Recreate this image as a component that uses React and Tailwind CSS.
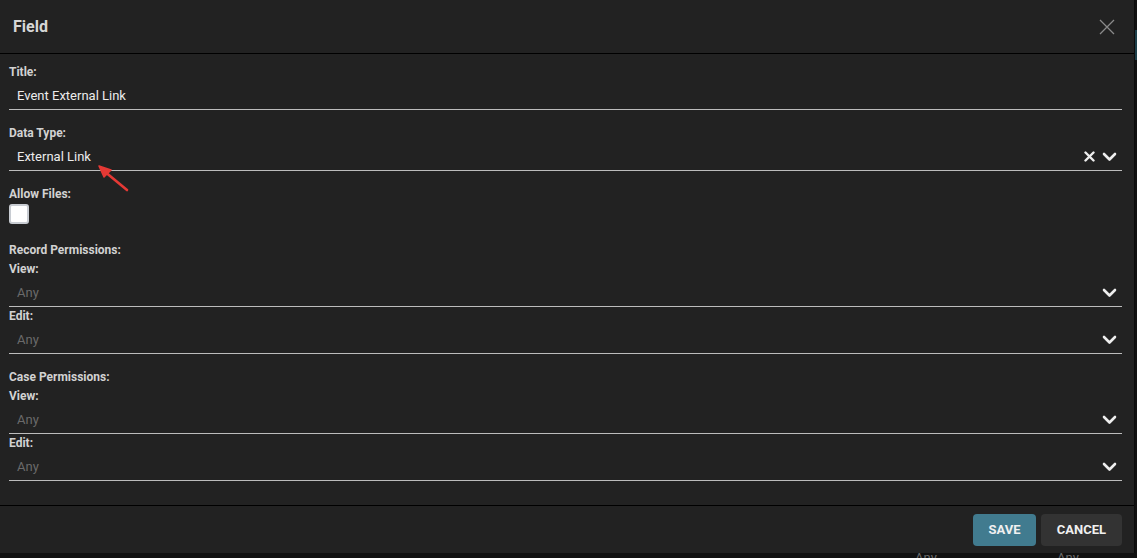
import React from 'react';

const Chevron = () => (
  <svg width="15" height="10" viewBox="0 0 15 10" className="shrink-0">
    <path d="M2 2 L7.5 7.5 L13 2" fill="none" stroke="#eeeeee" strokeWidth="2.6" strokeLinecap="round" strokeLinejoin="round" />
  </svg>
);

const ClearX = () => (
  <svg width="11" height="11" viewBox="0 0 11 11" className="shrink-0">
    <path d="M1.5 1.5 L9.5 9.5 M9.5 1.5 L1.5 9.5" stroke="#eeeeee" strokeWidth="2.4" strokeLinecap="round" />
  </svg>
);

const Label = ({ children }) => (
  <div className="h-[19px] leading-[19px] text-[12px] font-bold text-[#d2d2d2]">{children}</div>
);

const Field = ({ label, value, placeholder, clearable, select, className = '' }) => (
  <div className={className}>
    <Label>{label}</Label>
    <div className="h-[27px] flex items-center pl-[8px] pr-[5px] border-b border-[#bdbdbd] box-content">
      <span className={`flex-1 text-[13px] ${value ? 'text-[#ececec]' : 'text-[#6a6a6a]'}`}>{value || placeholder}</span>
      {clearable && <span className="mr-[7px] flex"><ClearX /></span>}
      {select && <Chevron />}
    </div>
  </div>
);

export default function App() {
  return (
    <div className="w-[1137px] h-[558px] overflow-hidden bg-[#111111]" style={{ fontFamily: 'Roboto, "Liberation Sans", sans-serif' }}>
      <div className="flex">
        <div className="w-[1135px] h-[553px] bg-[#222222] border-r border-[#0c0c0c] flex flex-col">
          <div className="h-[53px] flex items-center justify-between pl-[13px] pr-[19px] border-b border-black box-content">
            <h1 className="text-[16px] font-bold text-[#d6d6d6]">Field</h1>
            <svg width="16" height="16" viewBox="0 0 16 16">
              <path d="M1 1 L15 15 M15 1 L1 15" stroke="#8a8a8a" strokeWidth="1.3" />
            </svg>
          </div>

          <div className="relative pl-[9px] pr-[12px] pt-[9px] h-[451px]">
            <Field label="Title:" value="Event External Link" className="mb-[14px]" />
            <Field label="Data Type:" value="External Link" clearable select className="mb-[14px]" />

            <Label>Allow Files:</Label>
            <div className="w-[20px] h-[20px] bg-white border-2 border-[#c8ccd2] rounded-[3px] mb-[17px]" />

            <Label>Record Permissions:</Label>
            <Field label="View:" placeholder="Any" select />
            <Field label="Edit:" placeholder="Any" select className="mb-[14px]" />

            <Label>Case Permissions:</Label>
            <Field label="View:" placeholder="Any" select />
            <Field label="Edit:" placeholder="Any" select />

            <svg className="absolute left-[95px] top-[108px]" width="40" height="34" viewBox="0 0 40 34">
              <path d="M32 28 L9 9" stroke="#e53935" strokeWidth="2.6" strokeLinecap="round" />
              <path d="M4 4 L16 8 L9 15 Z" fill="#e53935" stroke="#e53935" strokeWidth="1.5" strokeLinejoin="round" />
            </svg>
          </div>

          <div className="flex-1 border-t border-black flex items-start justify-end gap-[5px] pt-[8px] pr-[12px]">
            <button className="h-[32px] w-[63px] rounded-[4px] bg-[#417b8f] text-[13px] font-bold text-[#f0f0f0]">SAVE</button>
            <button className="h-[32px] w-[81px] rounded-[4px] bg-[#333333] text-[13px] font-bold text-[#f0f0f0]">CANCEL</button>
          </div>
        </div>
        <div className="flex-1 flex flex-col">
          <div className="h-[30px]" />
          <div className="h-[30px] bg-[#1d3f4a]" />
        </div>
      </div>
      <div className="relative h-[5px] overflow-hidden">
        <span className="absolute left-[915px] -top-[5px] text-[13px] text-[#6a6a6a]">Any</span>
        <span className="absolute left-[1057px] -top-[5px] text-[13px] text-[#6a6a6a]">Any</span>
      </div>
    </div>
  );
}
